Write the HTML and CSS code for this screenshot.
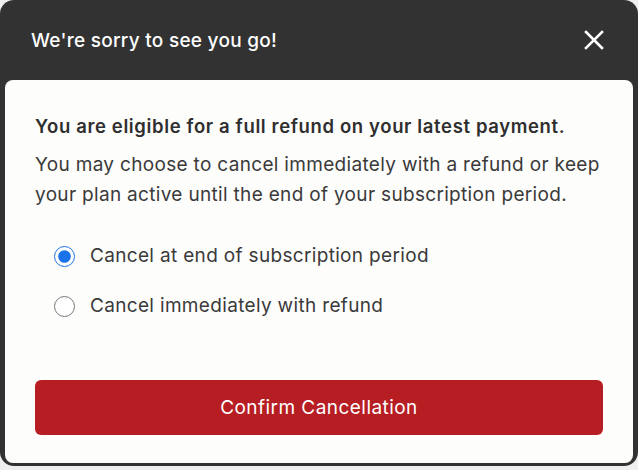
FILE: index.html
```html
<!DOCTYPE html>
<html lang="en">
<head>
<meta charset="utf-8">
<title>Cancel subscription</title>
<link rel="stylesheet" href="styles.css">
</head>
<body>
<div class="dialog" role="dialog" aria-labelledby="dlg-title">
  <div class="dialog-header">
    <h2 class="dialog-title" id="dlg-title">We're sorry to see you go!</h2>
    <button class="close-btn" aria-label="Close">
      <svg width="20" height="20" viewBox="0 0 20 20"><path d="M2 2 L18 18 M18 2 L2 18" stroke="#fff" stroke-width="2.6" stroke-linecap="square" fill="none"/></svg>
    </button>
  </div>
  <div class="dialog-body">
    <p class="lead">You are eligible for a full refund on your latest payment.</p>
    <p class="desc">You may choose to cancel immediately with a refund or keep your plan active until the end of your subscription period.</p>
    <div class="options">
      <label class="option"><input type="radio" name="when" checked><span>Cancel at end of subscription period</span></label>
      <label class="option"><input type="radio" name="when"><span>Cancel immediately with refund</span></label>
    </div>
    <button class="confirm-btn">Confirm Cancellation</button>
  </div>
</div>
</body>
</html>
```
FILE: styles.css
```css
* { box-sizing: border-box; }
html, body { margin: 0; padding: 0; }
body {
  background: #efefef;
  font-family: Inter, "Noto Sans", sans-serif;
  width: 638px;
  height: 470px;
}
.dialog {
  width: 638px;
  height: 466px;
  background: #323232;
  border-radius: 14px;
  padding: 0 5px 3px 5px;
  display: flex;
  flex-direction: column;
}
.dialog-header {
  height: 80px;
  display: flex;
  align-items: center;
  justify-content: space-between;
  padding: 0 29px 0 26px;
  flex: none;
}
.dialog-title {
  margin: 0;
  color: #fff;
  font-size: 19px;
  font-weight: 500;
  letter-spacing: 0.27px;
}
.close-btn {
  background: none;
  border: 0;
  padding: 0;
  width: 20px;
  height: 20px;
  display: flex;
  cursor: pointer;
}
.dialog-body {
  flex: 1;
  background: #fdfdfc;
  border-radius: 8px;
  padding: 34px 30px 28px 30px;
  display: flex;
  flex-direction: column;
  color: #333;
}
.lead {
  margin: 0;
  font-size: 18.5px;
  line-height: 24px;
  font-weight: 600;
  letter-spacing: 0.63px;
  color: #2e2e2e;
}
.desc {
  margin: 12px 0 0 0;
  font-size: 19px;
  line-height: 30px;
  letter-spacing: 0.32px;
  color: #3a3a3a;
}
.options {
  margin-top: 32px;
  display: flex;
  flex-direction: column;
  gap: 22px;
  padding-left: 19px;
}
.option {
  display: flex;
  align-items: center;
  gap: 15px;
  font-size: 19px;
  line-height: 28px;
  letter-spacing: 0.33px;
  color: #3a3a3a;
}
.option input {
  margin: 0;
  width: 21px;
  height: 21px;
  accent-color: #1a73e8;
}
.confirm-btn {
  margin-top: auto;
  height: 55px;
  background: #b71e23;
  color: #fff;
  border: 0;
  border-radius: 6px;
  font-family: inherit;
  font-size: 19px;
  letter-spacing: 0.45px;
  cursor: pointer;
}
```
